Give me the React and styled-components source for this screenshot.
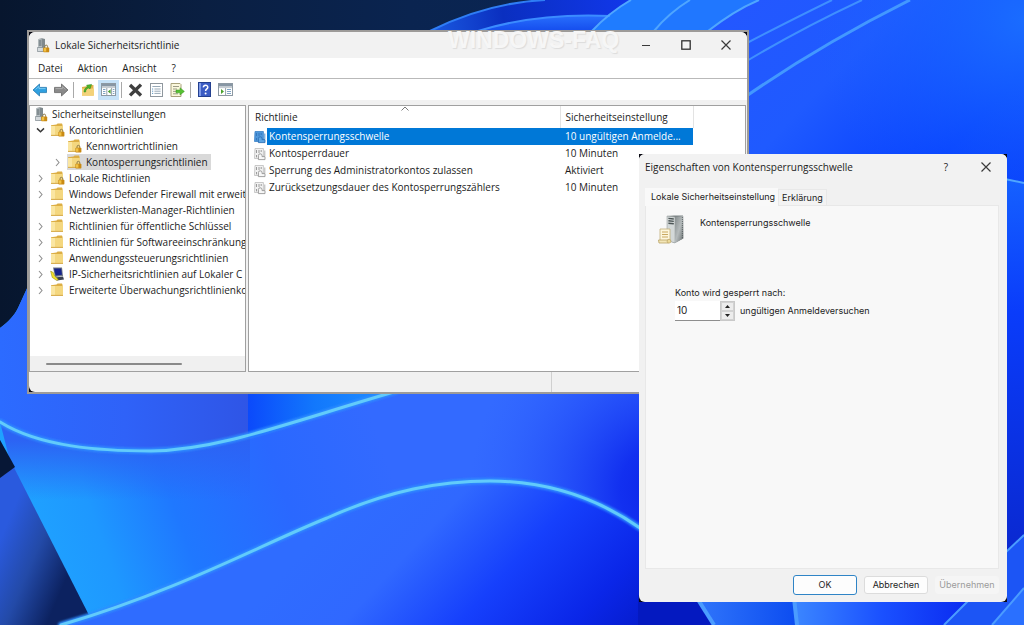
import React, { useState } from "react";
import styled, { createGlobalStyle } from "styled-components";

const GlobalStyle = createGlobalStyle`
  * { box-sizing: border-box; }
  body { margin: 0; background: #0a1f45; }
  button, input { font: inherit; color: inherit; }
`;

const uiFont = `"Open Sans", "Noto Sans", sans-serif`;
const classicFont = `Inter, "Liberation Sans", sans-serif`;

/* ---------- desktop ---------- */

const Desktop = styled.main`
  position: relative;
  min-height: 100vh;
  overflow: hidden;
  font: 10px/16px ${uiFont};
  color: #1c1c1c;
`;

const WallpaperArt = styled.svg`
  position: absolute;
  inset: 0;
  width: 100%;
  height: 100%;
`;

function Wallpaper() {
  return (
    <WallpaperArt viewBox="0 0 1024 625" preserveAspectRatio="xMidYMid slice" aria-hidden="true">
      <defs>
        <linearGradient id="night" x1="0" y1="0" x2="1" y2="0">
          <stop offset="0" stopColor="#07162e" />
          <stop offset="0.2" stopColor="#0a1f42" />
          <stop offset="0.4" stopColor="#0a2450" />
          <stop offset="1" stopColor="#0c2a5c" />
        </linearGradient>
        <linearGradient id="arc" x1="430" y1="30" x2="640" y2="0" gradientUnits="userSpaceOnUse">
          <stop offset="0" stopColor="#1b5ae0" />
          <stop offset="0.35" stopColor="#0a2fc0" />
          <stop offset="1" stopColor="#1238ee" />
        </linearGradient>
        <linearGradient id="innerArc" x1="0" y1="14" x2="0" y2="34" gradientUnits="userSpaceOnUse">
          <stop offset="0" stopColor="#2a72ff" />
          <stop offset="1" stopColor="#1146ea" />
        </linearGradient>
        <linearGradient id="right" x1="700" y1="20" x2="1024" y2="330" gradientUnits="userSpaceOnUse">
          <stop offset="0" stopColor="#2457ff" />
          <stop offset="0.3" stopColor="#1f5aff" />
          <stop offset="0.6" stopColor="#0640ff" />
          <stop offset="1" stopColor="#0a3cf5" />
        </linearGradient>
        <radialGradient id="glow" cx="1024" cy="20" r="210" gradientUnits="userSpaceOnUse">
          <stop offset="0" stopColor="#1a6cff" />
          <stop offset="1" stopColor="#1a60ff" stopOpacity="0" />
        </radialGradient>
        <linearGradient id="edge" x1="0" y1="180" x2="0" y2="560" gradientUnits="userSpaceOnUse">
          <stop offset="0" stopColor="#1560ff" />
          <stop offset="0.35" stopColor="#0a3cfa" />
          <stop offset="1" stopColor="#0a28cf" />
        </linearGradient>
        <linearGradient id="upper" x1="0" y1="0" x2="250" y2="0" gradientUnits="userSpaceOnUse">
          <stop offset="0" stopColor="#2c6bff" />
          <stop offset="0.5" stopColor="#2f62f8" />
          <stop offset="1" stopColor="#2f55e6" />
        </linearGradient>
        <linearGradient id="pocket" x1="247" y1="0" x2="360" y2="0" gradientUnits="userSpaceOnUse">
          <stop offset="0" stopColor="#0b49fb" />
          <stop offset="0.6" stopColor="#1278fc" />
          <stop offset="1" stopColor="#1b86ff" />
        </linearGradient>
        <linearGradient id="middle" x1="40" y1="560" x2="380" y2="440" gradientUnits="userSpaceOnUse">
          <stop offset="0" stopColor="#1fa2ff" />
          <stop offset="0.18" stopColor="#1e98ff" />
          <stop offset="0.4" stopColor="#1f78ff" />
          <stop offset="0.7" stopColor="#2a68ff" />
          <stop offset="1" stopColor="#336aff" />
        </linearGradient>
        <radialGradient id="middleShade" cx="670" cy="490" r="200" gradientUnits="userSpaceOnUse">
          <stop offset="0" stopColor="#0b22e6" />
          <stop offset="0.25" stopColor="#1230f0" />
          <stop offset="1" stopColor="#2c5cff" stopOpacity="0" />
        </radialGradient>
        <linearGradient id="ridge" x1="0" y1="440" x2="0" y2="500" gradientUnits="userSpaceOnUse">
          <stop offset="0" stopColor="#2c63f4" />
          <stop offset="1" stopColor="#2c63f4" stopOpacity="0" />
        </linearGradient>
        <linearGradient id="lower" x1="360" y1="490" x2="620" y2="730" gradientUnits="userSpaceOnUse">
          <stop offset="0" stopColor="#2f6cff" />
          <stop offset="0.22" stopColor="#3068ff" />
          <stop offset="0.46" stopColor="#1640fc" />
          <stop offset="0.7" stopColor="#0a26e8" />
          <stop offset="0.9" stopColor="#0419c4" />
        </linearGradient>
        <linearGradient id="petal" x1="0" y1="540" x2="70" y2="570" gradientUnits="userSpaceOnUse">
          <stop offset="0" stopColor="#2a5ade" />
          <stop offset="0.5" stopColor="#234aa8" />
          <stop offset="1" stopColor="#0c2260" />
        </linearGradient>
        <linearGradient id="foldA" x1="700" y1="0" x2="800" y2="0" gradientUnits="userSpaceOnUse">
          <stop offset="0" stopColor="#2f74fa" />
          <stop offset="1" stopColor="#0b4bf0" />
        </linearGradient>
        <linearGradient id="foldB" x1="795" y1="0" x2="970" y2="0" gradientUnits="userSpaceOnUse">
          <stop offset="0" stopColor="#3b86ff" />
          <stop offset="0.5" stopColor="#1a50ff" />
          <stop offset="1" stopColor="#0a2af0" />
        </linearGradient>
        <filter id="soft" x="-20%" y="-20%" width="140%" height="140%">
          <feGaussianBlur stdDeviation="1" />
        </filter>
      </defs>

      <rect width="1024" height="625" fill="url(#night)" />

      <path d="M430 31C468 12 505 2 545 0H1024V625H600V100H430Z" fill="url(#arc)" />
      <path d="M478 31C520 18 565 14 612 16L600 60H478Z" fill="url(#innerArc)" />
      <path d="M592 31Q610 12 631 0H1024V400H592Z" fill="#1f7cff" />
      <path d="M654 31Q670 12 690 0H1024V400H654Z" fill="#2077ff" />
      <path d="M708 31Q735 10 759 0H1024V600H708Z" fill="url(#right)" />
      <rect x="748" width="276" height="240" fill="url(#glow)" />
      <path d="M1000 178L1024 183V560H1000Z" fill="url(#edge)" />

      <g fill="none" stroke="#4fa6ff" strokeWidth="2">
        <path d="M430 31C468 12 505 2 545 0" stroke="#2f7df5" />
        <path d="M478 31C520 18 565 14 610 16" stroke="#3b8cff" />
        <path d="M592 31Q610 12 631 0" />
        <path d="M654 31Q670 12 690 0" />
        <path d="M708 31Q735 10 759 0" />
        <path d="M745 44Q785 23 832 0" stroke="#3f8fff" />
        <path d="M745 62Q800 29 862 0" stroke="#3f8fff" />
        <path d="M745 97Q820 45 910 0" stroke="#4398ff" strokeWidth="3" />
        <path d="M1000 178L1024 183" />
      </g>

      <path d="M0 328C8 322 14 316 18 308L40 260V380H640V625H0Z" fill="url(#middle)" />
      <path d="M151 451C220 450 290 422 397 380H640V530H151Z" fill="url(#middleShade)" />
      <path d="M0 328C8 322 14 316 18 308L40 260V380H250V437C220 446 190 451 151 451C100 451 40 447 0 422Z" fill="url(#upper)" />
      <path d="M0 422C40 447 100 451 151 451C190 451 220 446 250 437V500H20Z" fill="url(#ridge)" />
      <path d="M248 380H430L392 393C330 410 290 428 248 438Z" fill="url(#pocket)" />

      <path d="M0 440L94 625H0Z" fill="url(#petal)" />
      <path d="M0 440L15 467L0 478Z" fill="#071736" />

      <path d="M61 625C180 590 260 545 327 518C390 490 440 481 490 481C550 481 600 500 640 528V625Z" fill="url(#lower)" />

      <g fill="none" strokeLinecap="round">
        <path d="M0 422C40 447 100 451 151 451C220 450 290 422 397 391" stroke="#2f8dff" strokeWidth="6" filter="url(#soft)" />
        <path d="M0 422C40 447 100 451 151 451C220 450 290 422 397 391" stroke="#62cbfb" strokeWidth="3" />
        <path d="M61 625C180 590 260 545 327 518C390 490 440 481 490 481C550 481 600 500 640 528" stroke="#2f8dff" strokeWidth="6" filter="url(#soft)" />
        <path d="M61 625C180 590 260 545 327 518C390 490 440 481 490 481C550 481 600 500 640 528" stroke="#62cbfb" strokeWidth="3" />
      </g>

      <path d="M638 595H1024V625H638Z" fill="#0419c0" />
      <path d="M697 598L714 625H798V598Z" fill="url(#foldA)" />
      <path d="M794 598L797 625H950L972 598Z" fill="url(#foldB)" />
      <path d="M968 600L943 625H1024V534L1005 553Z" fill="#1c55f5" />
      <path d="M1024 588L992 625H1024Z" fill="#2a70ff" />
      <g fill="none" stroke="#4b9cff" strokeWidth="2">
        <path d="M697 598L714 625" strokeWidth="4" />
        <path d="M794 598L797 625" strokeWidth="4" />
        <path d="M970 599L944 625" />
        <path d="M1024 535L1005 553" />
        <path d="M1024 588L992 625" />
      </g>
    </WallpaperArt>
  );
}

/* ---------- window frame ---------- */

const ConsoleWindow = styled.section`
  position: absolute;
  top: 30px;
  left: 27px;
  right: 275px;
  border: 2px solid #9d9b99;
  background: #0b0b14;
`;

const PropertiesDialog = styled.section`
  position: absolute;
  top: 154px;
  right: 17px;
  width: 368px;
  max-width: calc(100% - 34px);
  background: #0b0b14;
`;

const WindowBody = styled.div`
  display: flex;
  flex-direction: column;
  border-radius: 6px;
  overflow: hidden;
  background: #f1f1f1;
`;

const TitleBar = styled.header`
  display: flex;
  align-items: center;
  gap: 5px;
  height: 26px;
  padding: 0 1px 0 ${(p) => (p.$dialog ? 6 : 8)}px;
  background: #f2f2f2;
`;

const WindowTitle = styled.h1`
  flex: 1;
  margin: 0;
  font-size: 10px;
  font-weight: 400;
  white-space: nowrap;
`;

const CaptionButtons = styled.div`
  display: flex;
`;

const CaptionButton = styled.button`
  display: grid;
  place-items: center;
  width: 40px;
  height: 26px;
  padding: 0;
  border: 0;
  background: none;
`;

const Watermark = styled.div`
  position: absolute;
  top: -7px;
  left: 419px;
  font: bold 23px/30px "Liberation Sans", sans-serif;
  color: #f6f6f6;
  text-shadow: 1px 1px 1px #dcdcdc;
  white-space: nowrap;
  pointer-events: none;
`;

/* ---------- menu and toolbar ---------- */

const MenuBar = styled.nav`
  display: flex;
  align-items: center;
  gap: 15px;
  height: 21px;
  padding-left: 9px;
  background: #fff;
  border-bottom: 1px solid #b9b9b9;
`;

const MenuItem = styled.button`
  padding: 0;
  border: 0;
  background: none;
`;

const ToolBar = styled.div`
  display: flex;
  align-items: center;
  height: 21px;
  background: #fff;
`;

const ToolButton = styled.button`
  display: grid;
  place-items: center;
  width: 21px;
  height: 20px;
  padding: 0;
  border: 0;
  background: ${(p) => (p.$active ? "#c6e2f8" : "none")};
`;

const ToolDivider = styled.span`
  width: 1px;
  height: 16px;
  margin: 0 3px 0 2px;
  background: #a9a9a9;
`;

/* ---------- panes ---------- */

const Panes = styled.div`
  display: grid;
  grid-template-columns: 217px 1fr;
  gap: 2px;
  padding: 5px 1px 0 0;
`;

const Pane = styled.div`
  display: flex;
  flex-direction: column;
  min-width: 0;
  min-height: 267px;
  border: 1px solid #a0a0a0;
  background: #fff;
`;

const TreeList = styled.ul`
  flex: 1;
  margin: 0;
  padding: 0;
  list-style: none;
  overflow: hidden;
`;

const TreeRow = styled.li`
  display: flex;
  align-items: center;
  height: 16px;
  padding-left: ${(p) => [5, 5, 22][p.$level]}px;
  white-space: nowrap;
`;

const TreeToggle = styled.span`
  display: flex;
  flex: none;
  width: 15px;
`;

const TreeLabel = styled.span`
  display: flex;
  align-items: center;
  gap: 4px;
  height: 16px;
  padding-right: 3px;
  background: ${(p) => (p.$selected ? "#d9d9d9" : "none")};

  svg { flex: none; }
`;

const ScrollTrack = styled.div`
  display: flex;
  align-items: center;
  height: 15px;
  padding: 0 16px;
  background: #f0f0f0;
`;

const ScrollThumb = styled.div`
  width: 136px;
  height: 2px;
  border-radius: 1px;
  background: #8a8a8a;
`;

const PolicyTable = styled.table`
  width: 439px;
  margin-left: 5px;
  table-layout: fixed;
  border-collapse: collapse;
`;

const HeadCell = styled.th`
  position: relative;
  width: ${(p) => p.$width};
  height: 22px;
  padding: 0 0 0 ${(p) => (p.$first ? 1 : 5)}px;
  border-right: 1px solid #e3e3e3;
  font-weight: 400;
  text-align: left;
`;

const SortMark = styled.svg`
  position: absolute;
  top: 0;
  left: calc(50% - 6px);
`;

const PolicyRow = styled.tr`
  height: 17px;
  color: ${(p) => (p.$selected ? "#fff" : "inherit")};
`;

const NameCell = styled.td`
  padding: 0;
`;

const NameFlex = styled.div`
  display: flex;
  align-items: center;
  height: 17px;
`;

const PolicyName = styled.span`
  flex: 1;
  margin-left: 1px;
  padding-left: 2px;
  line-height: 17px;
  background: ${(p) => (p.$selected ? "#0078d7" : "none")};
`;

const ValueCell = styled.td`
  padding: 0 0 0 5px;
  overflow: hidden;
  vertical-align: top;
  white-space: nowrap;
  text-overflow: ellipsis;
  background: ${(p) => (p.$selected ? "#0078d7" : "none")};
`;

const StatusBar = styled.footer`
  display: grid;
  grid-template-columns: 523px 1fr;
  height: 20px;
`;

const StatusPart = styled.span`
  border-right: 1px solid #d0d0d0;
`;

/* ---------- dialog content ---------- */

const TabStrip = styled.div`
  display: flex;
  align-items: flex-end;
  height: 25px;
  padding-left: 6px;
  font-family: ${classicFont};
  font-size: 9px;
`;

const Tab = styled.button`
  position: relative;
  z-index: ${(p) => (p.$active ? 1 : 0)};
  height: ${(p) => (p.$active ? 18 : 16)}px;
  margin-bottom: ${(p) => (p.$active ? -1 : 0)}px;
  padding: ${(p) => (p.$active ? "0 2px 2px 5px" : "0 3px")};
  border: 1px solid ${(p) => (p.$active ? "#f9f9f9" : "#e8e8e8")};
  border-bottom: 0;
  background: ${(p) => (p.$active ? "#f9f9f9" : "#f3f3f3")};
  line-height: 14px;
  white-space: nowrap;
`;

const TabPanel = styled.div`
  min-height: 364px;
  margin: 0 8px 0 6px;
  padding: 9px 12px;
  border: 1px solid #e8e8e8;
  background: #f8f8f8;
  font-family: ${classicFont};
  font-size: 9px;
`;

const PolicyHeading = styled.div`
  display: flex;
  gap: 14px;
  padding-bottom: 40px;
`;

const LimitForm = styled.div`
  display: flex;
  flex-direction: column;
  padding-left: 17px;
`;

const LimitRow = styled.div`
  display: flex;
  align-items: center;
`;

const LimitInput = styled.input`
  width: 45px;
  height: 20px;
  padding: 0 2px 1px;
  border: 0;
  border-bottom: 1px solid #8e8e8e;
  background: #fff;
  font-size: 10px;
`;

const Spinner = styled.div`
  display: flex;
  flex-direction: column;
  width: 15px;
  height: 20px;
  margin-right: 5px;
  border: 1px solid #c9c9c9;
`;

const SpinButton = styled.button`
  display: grid;
  flex: 1;
  place-items: center;
  padding: 0;
  border: 1px solid #d2d2d2;
  background: #ececec;
`;

const DialogButtons = styled.footer`
  display: flex;
  justify-content: flex-end;
  align-items: center;
  gap: 7px;
  height: 33px;
  padding: 0 8px 1px;
  font-family: ${classicFont};
  font-size: 9px;
`;

const DialogButton = styled.button`
  width: 64px;
  height: ${(p) => (p.$primary ? 20 : 18)}px;
  padding: 0;
  border: 1px solid ${(p) => (p.$primary ? "#2f84c6" : "#dcdcdc")};
  border-radius: 3px;
  background: #fdfdfd;

  &:disabled {
    border-color: #f5f5f5;
    background: #f5f5f5;
    color: #9b9b9b;
  }
`;

/* ---------- icons ---------- */

const Lock = ({ x, y }) => (
  <g transform={`translate(${x} ${y})`}>
    <path d="M1.6 3V1.9a1.4 1.6 0 0 1 2.8 0V3" fill="none" stroke="#8d7a4a" strokeWidth="1" />
    <rect x="0" y="2.8" width="6" height="4.6" rx="0.6" fill="#c98a14" />
    <rect x="0.6" y="3.3" width="2.4" height="3.4" fill="#f2c244" />
  </g>
);

const ServerLockIcon = () => (
  <svg width="13" height="15" viewBox="0 0 13 15" aria-hidden="true">
    <path d="M1.5 1L5 0.3L8 1V12L5 13.4L1.5 12Z" fill="#7f898d" />
    <path d="M1.5 1L5 1.6V13.4L1.5 12Z" fill="#b9c1c4" />
    <path d="M1.8 3h2.8M1.8 5h2.8M1.8 7h2.8" stroke="#4e5a60" />
    <path d="M0.4 9.5h6v4H0.4z" fill="#d5dadd" stroke="#7d888e" strokeWidth="0.7" />
    <Lock x={6.2} y={6.8} />
  </svg>
);

const FolderIcon = ({ locked }) => (
  <svg width="15" height="14" viewBox="0 0 15 14" aria-hidden="true">
    <path d="M1 2.2L6.5 1.6L7.6 0.6H12L12.6 2V12H1Z" fill="#dcae44" />
    <path d="M1 3H13V12.6H1Z" fill="#f4d77f" />
    <path d="M1 3H5V12.6H1Z" fill="#fae6a2" />
    <path d="M1 12.4H13" stroke="#d0a23c" strokeWidth="0.9" />
    {locked && <Lock x={8.4} y={6} />}
  </svg>
);

const MonitorIcon = () => (
  <svg width="15" height="14" viewBox="0 0 15 14" aria-hidden="true">
    <path d="M3 0.5H12L13 9L5 10Z" fill="#6f7786" />
    <path d="M4 1.5H11.2L12 7.8L5.6 8.6Z" fill="#16248c" />
    <path d="M5 10.4L13 9.4L14 12.4L7 13.6Z" fill="#3c4250" />
    <path d="M0.6 4L3.4 5.6L4.6 9L8.4 12.6L6.6 13.4L2.2 10.4Z" fill="#f2e12c" stroke="#8a8410" strokeWidth="0.5" />
  </svg>
);

const PolicyIcon = ({ selected }) => (
  <svg width="12" height="14" viewBox="0 0 12 14" aria-hidden="true">
    <path d="M1 1.5H9.4V11.5H0.5Z" fill={selected ? "#4f97da" : "#f2f2f2"} stroke={selected ? "#3a82c8" : "#bcbcbc"} strokeWidth="0.8" />
    <path d="M2.5 3v3M5 3v3M7.2 3v2M2.5 8v2.4" stroke={selected ? "#3577bd" : "#9a9a9a"} strokeWidth="1" />
    <path d="M4.4 12.6V8.6a1.8 1.8 0 0 1 3.6 0V9.6H11V12.6Z" fill={selected ? "#5ea5e2" : "#f7f7f7"} stroke={selected ? "#2f70b5" : "#969696"} strokeWidth="0.9" />
    <path d="M10.8 3.5V9" stroke={selected ? "#3a82c8" : "#a8a8a8"} strokeWidth="0.9" />
  </svg>
);

const Chevron = ({ open }) => (
  <svg width="10" height="10" viewBox="0 0 10 10" aria-hidden="true">
    <path
      d={open ? "M2 3.4L5.5 6.8L9 3.4" : "M4 2L7 5.5L4 9"}
      fill="none"
      stroke={open ? "#3a3a3a" : "#8e8e8e"}
      strokeWidth={open ? 1.5 : 1.1}
    />
  </svg>
);

const ArrowIcon = ({ back }) => (
  <svg width="16" height="14" viewBox="0 0 16 14" aria-hidden="true">
    <path
      d={back ? "M1 7L7.5 1V4.4H14.5V9.6H7.5V13Z" : "M15 7L8.5 1V4.4H1.5V9.6H8.5V13Z"}
      fill={back ? "#2fa0e0" : "#8a8a8a"}
      stroke={back ? "#2478ae" : "#666"}
      strokeWidth="0.8"
    />
    <path d={back ? "M3.5 6.4L7 3.4V5.6H13.5" : "M2.6 5.6H9.4V3.6L12.6 6.4"} fill="none" stroke={back ? "#8ad2f6" : "#b5b5b5"} strokeWidth="0.8" />
  </svg>
);

const UpFolderIcon = () => (
  <svg width="14" height="14" viewBox="0 0 14 14" aria-hidden="true">
    <path d="M1 4L7 3L8 2H12.5V12.6H1Z" fill="#e0b24a" />
    <path d="M1 5.4H13V12.8H1Z" fill="#f3d27a" />
    <path d="M3 9C3.2 6 4.4 4.6 6.6 4L5.6 2.2L10.6 1.4L9 6L7.8 4.9C6 5.4 4.8 6.6 4.6 9Z" fill="#4db52c" stroke="#2d8a16" strokeWidth="0.5" />
  </svg>
);

const PanelIcon = ({ side }) => (
  <svg width="15" height="13" viewBox="0 0 15 13" aria-hidden="true">
    <rect x="0.5" y="0.5" width="14" height="12" fill="#fff" stroke="#8d99a3" />
    <path d="M1 1H14V3.6H1Z" fill="#8796a4" />
    <path d="M1 4.6H14" stroke="#c0c8ce" />
    {side === "left" ? (
      <>
        <path d="M5.8 5V12M10.6 5V12" stroke="#98a4ad" />
        <path d="M2 6.5h2.4M2 8.5h2.4M2 10.5h2.4M11.8 6.5h1.6M11.8 8.5h1.6M11.8 10.5h1.6" stroke="#7fa3c4" />
        <path d="M9.6 6.2V10.8L6.8 8.5Z" fill="#4aa12e" />
      </>
    ) : (
      <>
        <path d="M7.6 5V12" stroke="#98a4ad" />
        <path d="M9 6.5h4M9 8.5h4M9 10.5h4" stroke="#7fa3c4" />
        <path d="M3 6V11L6 8.5Z" fill="#4aa12e" />
      </>
    )}
  </svg>
);

const DeleteIcon = () => (
  <svg width="15" height="14" viewBox="0 0 15 14" aria-hidden="true">
    <path d="M2 2L13 12.4M13 1.6L2 12.4" stroke="#3f3f3f" strokeWidth="3.4" />
  </svg>
);

const PropertiesIcon = () => (
  <svg width="13" height="14" viewBox="0 0 13 14" aria-hidden="true">
    <rect x="0.5" y="0.5" width="12" height="13" fill="#fff" stroke="#8f979e" />
    <path d="M2.4 3.5h8.2M4.4 6h6.2M4.4 8.2h6.2M4.4 10.4h6.2" stroke="#97a9b7" />
    <path d="M2 6h1.2M2 8.2h1.2M2 10.4h1.2" stroke="#5e97c4" />
  </svg>
);

const ExportIcon = () => (
  <svg width="15" height="14" viewBox="0 0 15 14" aria-hidden="true">
    <path d="M1 0.5H10L11 1.5V13.5H1Z" fill="#fbf8dd" stroke="#a9a27c" />
    <path d="M3 3.5h6M3 6h4M3 8.4h3M3 10.8h5" stroke="#9c9c88" />
    <path d="M6 7H10V4.8L14.4 8.4L10 12V9.8H6Z" fill="#56c133" stroke="#3a9420" strokeWidth="0.5" />
  </svg>
);

const HelpIcon = () => (
  <svg width="13" height="15" viewBox="0 0 13 15" aria-hidden="true">
    <rect x="0.5" y="0.5" width="12" height="14" fill="#3b5cc4" stroke="#24408f" />
    <path d="M1 1H3V14H1Z" fill="#7f9be8" />
    <path d="M5.4 5.4C5.2 2.6 9.8 2.6 9.8 5.2C9.8 7 7.6 6.8 7.6 9" fill="none" stroke="#fff" strokeWidth="1.5" />
    <circle cx="7.6" cy="11.4" r="1" fill="#fff" />
  </svg>
);

const CloseGlyph = () => (
  <svg width="10" height="10" viewBox="0 0 10 10" aria-hidden="true">
    <path d="M0.5 0.5L9.5 9.5M9.5 0.5L0.5 9.5" stroke="#3a3a3a" strokeWidth="1.2" />
  </svg>
);

const MinimizeGlyph = () => (
  <svg width="10" height="10" viewBox="0 0 10 10" aria-hidden="true">
    <path d="M1 5.5H9" stroke="#3a3a3a" />
  </svg>
);

const MaximizeGlyph = () => (
  <svg width="10" height="10" viewBox="0 0 10 10" aria-hidden="true">
    <rect x="0.8" y="0.8" width="8.4" height="8.4" fill="none" stroke="#2f2f2f" strokeWidth="1.3" />
  </svg>
);

const SpinGlyph = ({ up }) => (
  <svg width="5" height="3" viewBox="0 0 5 3" aria-hidden="true">
    <path d={up ? "M0 3L2.5 0L5 3Z" : "M0 0L2.5 3L5 0Z"} fill="#222" />
  </svg>
);

const PolicyServerIcon = () => (
  <svg width="28" height="30" viewBox="0 0 28 30" aria-hidden="true">
    <defs>
      <linearGradient id="tower" x1="0" y1="0" x2="1" y2="1">
        <stop offset="0" stopColor="#858c8d" />
        <stop offset="0.5" stopColor="#b4babb" />
        <stop offset="1" stopColor="#666d6e" />
      </linearGradient>
    </defs>
    <path d="M9 1L16 0.5L25 0.5V23.5L17 28L9 25.5Z" fill="#7d8485" />
    <path d="M9 1L17 2V28L9 25.5Z" fill="#d3d8d8" stroke="#8d9495" strokeWidth="0.5" />
    <path d="M17 2L25.4 0.9V23.5L17 28Z" fill="url(#tower)" />
    <path d="M10.4 3.4L15.8 4M10.4 5.8L15.8 6.4M10.4 8.2L15.8 8.8" stroke="#4c5556" strokeWidth="1.4" />
    <path d="M24.4 2V23.5" stroke="#4f5758" strokeWidth="0.8" strokeDasharray="1 1" />
    <path d="M2 14H12V26H2Z" fill="#fdf6dc" stroke="#c2ae78" strokeWidth="0.8" />
    <path d="M4 17h6M4 19.5h6M4 22h6" stroke="#c9a860" />
    <path d="M0.5 25H10.5V28H1Z" fill="#f3e6b8" stroke="#b9a265" strokeWidth="0.8" />
    <circle cx="11" cy="26.2" r="1.9" fill="#ecd998" stroke="#b9a265" strokeWidth="0.7" />
  </svg>
);

/* ---------- data ---------- */

const treeItems = [
  { level: 0, label: "Sicherheitseinstellungen", icon: <ServerLockIcon /> },
  { level: 1, label: "Kontorichtlinien", icon: <FolderIcon locked />, toggle: "open" },
  { level: 2, label: "Kennwortrichtlinien", icon: <FolderIcon locked /> },
  { level: 2, label: "Kontosperrungsrichtlinien", icon: <FolderIcon locked />, toggle: "closed", selected: true },
  { level: 1, label: "Lokale Richtlinien", icon: <FolderIcon locked />, toggle: "closed" },
  { level: 1, label: "Windows Defender Firewall mit erweit", icon: <FolderIcon />, toggle: "closed" },
  { level: 1, label: "Netzwerklisten-Manager-Richtlinien", icon: <FolderIcon /> },
  { level: 1, label: "Richtlinien für öffentliche Schlüssel", icon: <FolderIcon />, toggle: "closed" },
  { level: 1, label: "Richtlinien für Softwareeinschränkung", icon: <FolderIcon />, toggle: "closed" },
  { level: 1, label: "Anwendungssteuerungsrichtlinien", icon: <FolderIcon />, toggle: "closed" },
  { level: 1, label: "IP-Sicherheitsrichtlinien auf Lokaler C", icon: <MonitorIcon />, toggle: "closed" },
  { level: 1, label: "Erweiterte Überwachungsrichtlinienko", icon: <FolderIcon />, toggle: "closed" },
];

const policies = [
  { name: "Kontensperrungsschwelle", value: "10 ungültigen Anmelde...", selected: true },
  { name: "Kontosperrdauer", value: "10 Minuten" },
  { name: "Sperrung des Administratorkontos zulassen", value: "Aktiviert" },
  { name: "Zurücksetzungsdauer des Kontosperrungszählers", value: "10 Minuten" },
];

/* ---------- page ---------- */

function PolicyConsole() {
  return (
    <ConsoleWindow aria-label="Lokale Sicherheitsrichtlinie">
      <WindowBody>
        <TitleBar>
          <ServerLockIcon />
          <WindowTitle>Lokale Sicherheitsrichtlinie</WindowTitle>
          <CaptionButtons>
            <CaptionButton aria-label="Minimieren"><MinimizeGlyph /></CaptionButton>
            <CaptionButton aria-label="Maximieren"><MaximizeGlyph /></CaptionButton>
            <CaptionButton aria-label="Schließen"><CloseGlyph /></CaptionButton>
          </CaptionButtons>
        </TitleBar>
        <MenuBar>
          {["Datei", "Aktion", "Ansicht", "?"].map((item) => (
            <MenuItem key={item}>{item}</MenuItem>
          ))}
        </MenuBar>
        <ToolBar>
          <ToolButton aria-label="Zurück"><ArrowIcon back /></ToolButton>
          <ToolButton aria-label="Vorwärts"><ArrowIcon /></ToolButton>
          <ToolDivider />
          <ToolButton aria-label="Eine Ebene nach oben"><UpFolderIcon /></ToolButton>
          <ToolButton aria-label="Konsolenstruktur" $active><PanelIcon side="left" /></ToolButton>
          <ToolDivider />
          <ToolButton aria-label="Löschen"><DeleteIcon /></ToolButton>
          <ToolButton aria-label="Eigenschaften"><PropertiesIcon /></ToolButton>
          <ToolButton aria-label="Liste exportieren"><ExportIcon /></ToolButton>
          <ToolDivider />
          <ToolButton aria-label="Hilfe"><HelpIcon /></ToolButton>
          <ToolButton aria-label="Aktionsbereich"><PanelIcon side="right" /></ToolButton>
        </ToolBar>
        <Panes>
          <Pane>
            <TreeList>
              {treeItems.map((item) => (
                <TreeRow key={item.label} $level={item.level}>
                  {item.level > 0 && (
                    <TreeToggle>{item.toggle && <Chevron open={item.toggle === "open"} />}</TreeToggle>
                  )}
                  <TreeLabel $selected={item.selected}>
                    {item.icon}
                    {item.label}
                  </TreeLabel>
                </TreeRow>
              ))}
            </TreeList>
            <ScrollTrack><ScrollThumb /></ScrollTrack>
          </Pane>
          <Pane>
            <PolicyTable>
              <thead>
                <tr>
                  <HeadCell $first $width="306px">
                    Richtlinie
                    <SortMark width="8" height="5" viewBox="0 0 8 5" aria-hidden="true">
                      <path d="M0.5 4.5L4 1L7.5 4.5" fill="none" stroke="#7a7a7a" />
                    </SortMark>
                  </HeadCell>
                  <HeadCell $width="133px">Sicherheitseinstellung</HeadCell>
                </tr>
              </thead>
              <tbody>
                {policies.map((policy) => (
                  <PolicyRow key={policy.name} $selected={policy.selected}>
                    <NameCell>
                      <NameFlex>
                        <PolicyIcon selected={policy.selected} />
                        <PolicyName $selected={policy.selected}>{policy.name}</PolicyName>
                      </NameFlex>
                    </NameCell>
                    <ValueCell $selected={policy.selected}>{policy.value}</ValueCell>
                  </PolicyRow>
                ))}
              </tbody>
            </PolicyTable>
          </Pane>
        </Panes>
        <StatusBar><StatusPart /></StatusBar>
      </WindowBody>
      <Watermark>WINDOWS-FAQ</Watermark>
    </ConsoleWindow>
  );
}

function PolicyProperties() {
  const [limit, setLimit] = useState(10);
  return (
    <PropertiesDialog aria-label="Eigenschaften von Kontensperrungsschwelle">
      <WindowBody>
        <TitleBar $dialog>
          <WindowTitle>Eigenschaften von Kontensperrungsschwelle</WindowTitle>
          <CaptionButtons>
            <CaptionButton aria-label="Hilfe">?</CaptionButton>
            <CaptionButton aria-label="Schließen"><CloseGlyph /></CaptionButton>
          </CaptionButtons>
        </TitleBar>
        <TabStrip role="tablist">
          <Tab role="tab" aria-selected="true" $active>Lokale Sicherheitseinstellung</Tab>
          <Tab role="tab" aria-selected="false">Erklärung</Tab>
        </TabStrip>
        <TabPanel role="tabpanel">
          <PolicyHeading>
            <PolicyServerIcon />
            <span>Kontensperrungsschwelle</span>
          </PolicyHeading>
          <LimitForm>
            <label htmlFor="limit">Konto wird gesperrt nach:</label>
            <LimitRow>
              <LimitInput id="limit" value={limit} onChange={(e) => setLimit(Number(e.target.value) || 0)} />
              <Spinner>
                <SpinButton aria-label="Erhöhen" onClick={() => setLimit(limit + 1)}><SpinGlyph up /></SpinButton>
                <SpinButton aria-label="Verringern" onClick={() => setLimit(Math.max(0, limit - 1))}><SpinGlyph /></SpinButton>
              </Spinner>
              <span>ungültigen Anmeldeversuchen</span>
            </LimitRow>
          </LimitForm>
        </TabPanel>
        <DialogButtons>
          <DialogButton $primary>OK</DialogButton>
          <DialogButton>Abbrechen</DialogButton>
          <DialogButton disabled>Übernehmen</DialogButton>
        </DialogButtons>
      </WindowBody>
    </PropertiesDialog>
  );
}

export default function App() {
  return (
    <>
      <GlobalStyle />
      <Desktop>
        <Wallpaper />
        <PolicyConsole />
        <PolicyProperties />
      </Desktop>
    </>
  );
}
